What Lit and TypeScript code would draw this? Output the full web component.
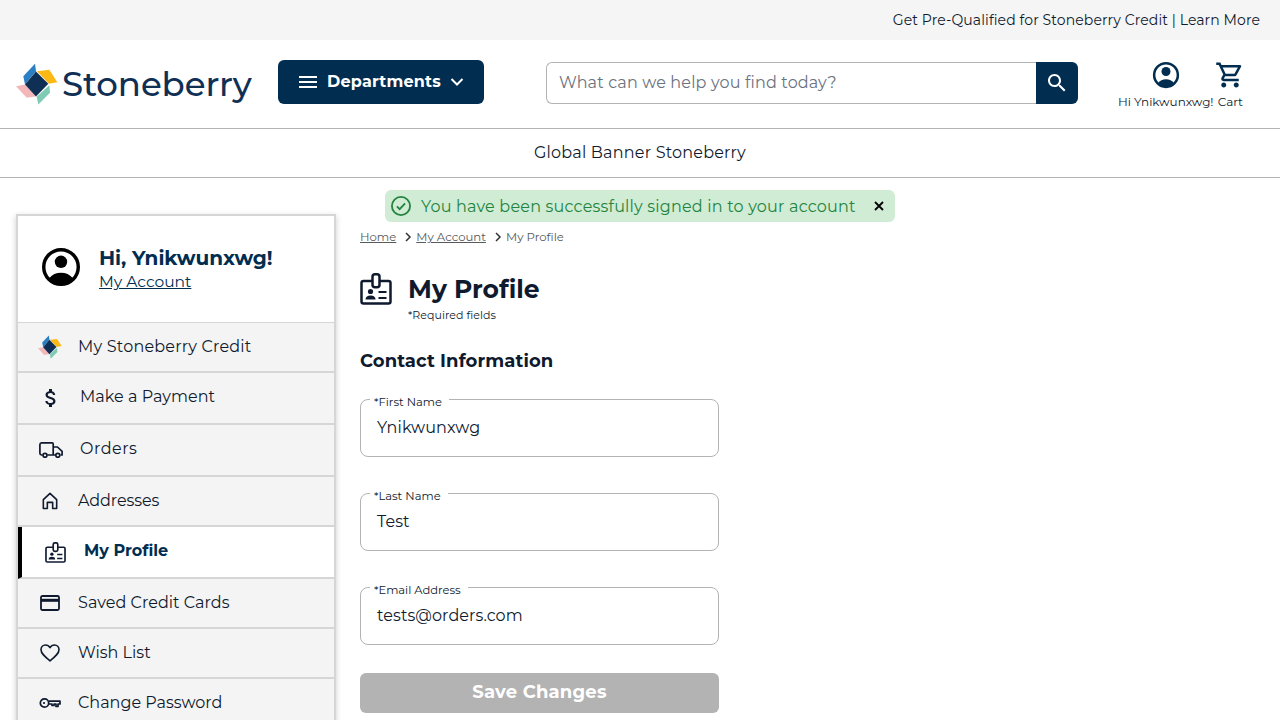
import { LitElement, html, css, svg } from "lit";
import { customElement } from "lit/decorators.js";

const logo = (size: number) => html`<svg class="logo-mark" viewBox="16 64 42 41" width=${size} height=${size} aria-hidden="true">
  <polygon points="23.3,76.7 35,64.3 36,71.7 25,85" fill="#2b7fc3"/>
  <polygon points="37,71.7 49.3,70.3 57.3,82.7 49,84.3" fill="#fdb913"/>
  <polygon points="16,86.7 25,85 36.7,96.7 26.7,98.3" fill="#f3b7b9"/>
  <polygon points="36.7,97.3 49.3,85.7 50,93.3 38.3,105" fill="#7fcbb3"/>
  <polygon points="36,72 48.3,84.3 36,97 25,85" fill="#102f55"/>
</svg>`;

const idBadge = svg`<path fill="none" stroke="currentColor" stroke-width="2.5" stroke-linejoin="round" d="M12 8H3.500a2 2 0 0 0-2 2v18.500a2 2 0 0 0 2 2h25a2 2 0 0 0 2-2V10a2 2 0 0 0-2-2H20"/>
<rect x="12.500" y="1.300" width="7" height="13" rx="2.500" fill="none" stroke="currentColor" stroke-width="2.500"/>
<circle cx="10.500" cy="18.500" r="2.600" fill="currentColor"/>
<path fill="currentColor" d="M5.500 26.500c0-2.800 2.200-4 5-4s5 1.200 5 4z"/>
<path stroke="currentColor" stroke-width="2.200" d="M18.500 19h8M18.500 25h8"/>`;

const icons: Record<string, unknown> = {
  dollar: html`<svg viewBox="0 0 24 24" width="24" height="24"><path fill="currentColor" d="M11.800 10.900c-2.270-.59-3-1.200-3-2.150 0-1.090 1.010-1.850 2.700-1.850 1.780 0 2.440.85 2.500 2.100h2.210c-.07-1.720-1.120-3.300-3.210-3.810V3h-3v2.160c-1.940.42-3.500 1.680-3.500 3.610 0 2.310 1.910 3.460 4.700 4.130 2.500.6 3 1.480 3 2.410 0 .69-.49 1.790-2.700 1.790-2.060 0-2.870-.92-2.980-2.100h-2.200c.12 2.190 1.760 3.420 3.680 3.830V21h3v-2.150c1.950-.37 3.500-1.500 3.500-3.550 0-2.840-2.430-3.810-4.700-4.400z"/></svg>`,
  truck: html`<svg viewBox="0 0 24 16" width="24" height="16"><path fill="none" stroke="currentColor" stroke-width="1.700" stroke-linejoin="round" d="M3.500 13H2.500A1.700 1.700 0 0 1 .9 11.300V2.500A1.700 1.700 0 0 1 2.500.9h10.700a1 1 0 0 1 1 1V13H8.500M14.200 5h4.300l4.600 4.300V13h-1.600M14.200 13h2.300"/><circle cx="6" cy="13.300" r="2" fill="none" stroke="currentColor" stroke-width="1.700"/><circle cx="18.800" cy="13.300" r="2" fill="none" stroke="currentColor" stroke-width="1.700"/></svg>`,
  home: html`<svg viewBox="0 0 18 20" width="16" height="18"><path fill="none" stroke="currentColor" stroke-width="1.800" stroke-linejoin="round" d="M1.500 8.500 9 1.500l7.500 7V18.500h-4.500V11.500H6v7H1.500z"/></svg>`,
  id: html`<svg viewBox="0 0 32 32" width="21" height="21">${idBadge}</svg>`,
  card: html`<svg viewBox="0 0 20 16" width="20" height="16"><rect x="1" y="1" width="18" height="14" rx="1.500" fill="none" stroke="currentColor" stroke-width="1.800"/><rect x="1" y="3.800" width="18" height="3" fill="currentColor"/></svg>`,
  heart: html`<svg viewBox="0 0 20 18" width="20" height="18"><path fill="none" stroke="currentColor" stroke-width="1.600" stroke-linejoin="round" d="M10 16.800C4.500 12.300 1 9.300 1 5.700 1 3 3 1 5.500 1 7.300 1 9 2 10 3.700 11 2 12.700 1 14.500 1 17 1 19 3 19 5.700c0 3.600-3.500 6.600-9 11.100z"/></svg>`,
  key: html`<svg viewBox="0 0 22 12" width="22" height="12"><circle cx="5.500" cy="6" r="4.200" fill="none" stroke="currentColor" stroke-width="1.700"/><circle cx="5" cy="6" r="1.100" fill="currentColor"/><path fill="none" stroke="currentColor" stroke-width="1.700" stroke-linejoin="round" d="M9.700 4.200H21V7h-2v2.500h-2V7h-2v1.500h-2V7H9.700"/></svg>`,
};

const nav = [
  { label: "My Stoneberry Credit", icon: "logo", cls: "h50", ls: 0.2 },
  { label: "Make a Payment", icon: "dollar", cls: "h52", ls: 0.05 },
  { label: "Orders", icon: "truck", cls: "h52", ls: 0.5 },
  { label: "Addresses", icon: "home", cls: "h50", ls: -0.1 },
  { label: "My Profile", icon: "id", cls: "h52 active", ls: 0 },
  { label: "Saved Credit Cards", icon: "card", cls: "h50", ls: 0.05 },
  { label: "Wish List", icon: "heart", cls: "h50", ls: 0 },
  { label: "Change Password", icon: "key", cls: "h50", ls: 0 },
];

const fields = [
  { label: "*First Name", value: "Ynikwunxwg" },
  { label: "*Last Name", value: "Test" },
  { label: "*Email Address", value: "tests@orders.com" },
];

@customElement("app-root")
export class AppRoot extends LitElement {
  static styles = css`
    :host { display: block; width: 1280px; height: 720px; overflow: hidden; position: relative; background: #fff; color: #0f1a2e; font-family: "Montserrat", "Inter", "Liberation Sans", sans-serif; }
    a { color: inherit; }
    .promo { height: 40px; background: #f5f5f5; display: flex; align-items: center; justify-content: flex-end; padding-right: 20px; font-size: 14px; letter-spacing: .1px; }
    .header { height: 88px; border-bottom: 1px solid #b3b3b3; display: flex; align-items: center; position: relative; }
    .brand { display: flex; align-items: center; margin-left: 16px; width: 262px; height: 42px; gap: 4px; }
    .wordmark { font-size: 34px; font-weight: 500; color: #102f55; letter-spacing: -.1px; line-height: 42px; }
    .dept { width: 206px; height: 44px; background: #002d50; color: #fff; border-radius: 6px; display: flex; align-items: center; justify-content: center; gap: 9px; font-weight: 700; font-size: 16px; letter-spacing: .2px; margin-top: -4px; padding: 0 0 2px 0; box-sizing: border-box; }
    .dept svg { margin-top: 2px; }
    .search { margin-left: 62px; width: 532px; height: 42px; display: flex; margin-top: -2px; }
    .search-box { flex: 1; border: 1px solid #b3b3b3; border-right: 0; border-radius: 6px 0 0 6px; display: flex; align-items: center; padding: 0 0 2px 12px; color: #6b7280; font-size: 16px; letter-spacing: .15px; }
    .search-btn { width: 42px; background: #002d50; border-radius: 0 6px 6px 0; display: flex; align-items: center; justify-content: center; color: #fff; }
    .acts { display: flex; margin-left: 40px; font-size: 12px; margin-top: 1px; letter-spacing: -.05px; }
    .act { display: flex; flex-direction: column; align-items: center; color: #002d50; gap: 4px; }
    .act + .act { margin-left: 2px; }
    .act span { color: #0f1a2e; white-space: nowrap; line-height: 15px; }
    .banner { height: 48px; border-bottom: 1px solid #b3b3b3; display: flex; align-items: center; justify-content: center; font-size: 16px; letter-spacing: .2px; padding-bottom: 2px; box-sizing: content-box; height: 46px; }
    .main { display: flex; padding: 36px 0 0 16px; }
    .side { width: 320px; flex: none; border: 2px solid #d6d6d6; box-sizing: border-box; box-shadow: 0 2px 6px rgba(0,0,0,.2); }
    .hello { height: 107px; box-sizing: border-box; border-bottom: 1px solid #d6d6d6; display: flex; align-items: center; padding: 0 0 0 24px; gap: 19px; }
    .hello svg { margin-bottom: 4px; }
    .hello-text { display: flex; flex-direction: column; }
    .hello strong { font-size: 20px; color: #002d50; font-weight: 700; line-height: 26px; letter-spacing: -.05px; }
    .hello a { font-size: 15.500px; color: #002d50; line-height: 22px; }
    .row { background: #f4f4f4; border-bottom: 2px solid #d6d6d6; box-sizing: border-box; display: flex; align-items: center; padding-left: 20px; font-size: 16px; }
    .h50 { height: 50px; }
    .h52 { height: 52px; padding-left: 21px; }
    .row .ic { display: flex; justify-content: center; align-items: center; flex: none; width: 24px; }
    .row .t { margin: 0 0 2px 16px; }
    .h52 .t { margin: 0 0 4px 17px; }
    .row.active { background: #fff; border-left: 4px solid #000; color: #002d50; font-weight: 700; }
    .row.active .ic { color: #0f1a2e; }
    .content { margin-left: 24px; width: 360px; flex: none; }
    .crumbs { display: flex; align-items: center; font-size: 11.700px; color: #5a5a5a; height: 16px; margin-top: 15px; }
    .crumbs svg { margin: 0 2px 0 6px; color: #333; }
    .title { display: flex; gap: 16px; margin-top: 28px; }
    .title svg { flex: none; }
    h1 { margin: 0; font-size: 25px; line-height: 32px; font-weight: 700; }
    .req { font-size: 11px; line-height: 16px; margin-top: 2px; letter-spacing: .05px; }
    h2 { margin: 26px 0 0; font-size: 18px; font-weight: 700; line-height: 24px; letter-spacing: .1px; }
    .field { position: relative; height: 58px; box-sizing: border-box; border: 1px solid #b3b3b3; border-radius: 8px; margin-top: 36px; width: 359px; display: flex; align-items: center; padding: 0 16px 2px; font-size: 16px; letter-spacing: .08px; }
    h2 + .field { margin-top: 26px; }
    .field label { position: absolute; left: 9px; top: -4px; padding: 0 7px 0 4px; background: #fff; font-size: 11.500px; line-height: 12px; letter-spacing: 0; }
    .save { margin-top: 28px; width: 359px; height: 40px; border-radius: 6px; background: #b3b3b3; color: #fff; font-weight: 700; font-size: 18px; letter-spacing: .2px; display: flex; align-items: center; justify-content: center; padding-bottom: 3px; box-sizing: border-box; }
    .alert { position: absolute; left: 385px; top: 190px; width: 510px; height: 32px; box-sizing: border-box; background: #d0ecd5; border-radius: 6px; display: flex; align-items: center; padding: 0 0 0 6px; color: #24843f; font-size: 16px; letter-spacing: .2px; gap: 10px; white-space: nowrap; }
    .alert .x { margin-left: 7px; color: #000; display: flex; }
  `;

  render() {
    return html`
      <div class="promo">Get Pre-Qualified for Stoneberry Credit | Learn More</div>
      <div class="header">
        <div class="brand">${logo(42)}<span class="wordmark">Stoneberry</span></div>
        <div class="dept">
          <svg width="20" height="14" viewBox="0 0 20 14"><path stroke="#fff" stroke-width="2" d="M1 2h18M1 7h18M1 12h18"/></svg>
          <span>Departments</span>
          <svg width="14" height="10" viewBox="0 0 14 10"><path fill="none" stroke="#fff" stroke-width="2" d="M1.500 2 7 7.500 12.500 2"/></svg>
        </div>
        <div class="search">
          <div class="search-box">What can we help you find today?</div>
          <div class="search-btn"><svg viewBox="0 0 24 24" width="24" height="24"><path fill="currentColor" d="M15.500 14h-.79l-.28-.27C15.410 12.590 16 11.110 16 9.500 16 5.910 13.090 3 9.500 3S3 5.910 3 9.500 5.910 16 9.500 16c1.610 0 3.090-.59 4.230-1.570l.27.280v.79l5 4.990L20.490 19l-4.990-5zm-6 0C7.010 14 5 11.990 5 9.500S7.010 5 9.500 5 14 7.010 14 9.500 11.990 14 9.500 14z"/></svg></div>
        </div>
        <div class="acts">
          <div class="act">
            <svg viewBox="0 0 24 24" width="30" height="30"><circle cx="12" cy="12" r="9.500" fill="none" stroke="currentColor" stroke-width="2"/><circle cx="12" cy="9.200" r="3.600" fill="currentColor"/><path fill="currentColor" d="M5.500 18.500C7 16.300 9.400 15.300 12 15.300s5 1 6.500 3.200C16.800 20.300 14.500 21.200 12 21.200s-4.800-.9-6.500-2.700z"/></svg>
            <span>Hi Ynikwunxwg!</span>
          </div>
          <div class="act">
            <svg viewBox="0 0 24 24" width="30" height="30"><path fill="currentColor" d="M15.550 13c.75 0 1.410-.41 1.750-1.030l3.580-6.490c.37-.66-.11-1.480-.87-1.480H5.210l-.94-2H1v2h2l3.600 7.590-1.350 2.440C4.520 15.370 5.480 17 7 17h12v-2H7l1.100-2h7.450zM6.160 6h12.150l-2.760 5H8.530L6.160 6zM7 18c-1.100 0-1.990.9-1.990 2S5.900 22 7 22s2-.9 2-2-.9-2-2-2zm10 0c-1.100 0-1.990.9-1.990 2s.89 2 1.990 2 2-.9 2-2-.9-2-2-2z"/></svg>
            <span>Cart</span>
          </div>
        </div>
      </div>
      <div class="banner">Global Banner Stoneberry</div>
      <div class="main">
        <aside class="side">
          <div class="hello">
            <svg viewBox="1 1 22 22" width="38" height="38"><circle cx="12" cy="12" r="10" fill="none" stroke="#000" stroke-width="2"/><circle cx="12" cy="9" r="3.600" fill="#000"/><path fill="#000" d="M5 18.600C6.800 16.300 9.300 15.300 12 15.300s5.200 1 7 3.300C17.200 20.600 14.700 21.800 12 21.800s-5.200-1.200-7-3.200z"/></svg>
            <div class="hello-text"><strong>Hi, Ynikwunxwg!</strong><a href="#">My Account</a></div>
          </div>
          ${nav.map(
            (n) => html`<div class="row ${n.cls}">
              <span class="ic">${n.icon === "logo" ? logo(24) : icons[n.icon]}</span>
              <span class="t" style="letter-spacing:${n.ls}px">${n.label}</span>
            </div>`
          )}
        </aside>
        <section class="content">
          <div class="crumbs">
            <a href="#">Home</a>
            <svg width="12" height="12" viewBox="0 0 12 12"><path fill="none" stroke="currentColor" stroke-width="1.500" d="M4 2l4 4-4 4"/></svg>
            <a href="#">My Account</a>
            <svg width="12" height="12" viewBox="0 0 12 12"><path fill="none" stroke="currentColor" stroke-width="1.500" d="M4 2l4 4-4 4"/></svg>
            <span>My Profile</span>
          </div>
          <div class="title">
            <svg viewBox="0 0 32 32" width="32" height="32">${idBadge}</svg>
            <div><h1>My Profile</h1><div class="req">*Required fields</div></div>
          </div>
          <h2>Contact Information</h2>
          ${fields.map((f) => html`<div class="field"><label>${f.label}</label>${f.value}</div>`)}
          <div class="save">Save Changes</div>
        </section>
      </div>
      <div class="alert">
        <svg viewBox="1 1 22 22" width="20" height="20"><circle cx="12" cy="12" r="10" fill="none" stroke="currentColor" stroke-width="2"/><path fill="none" stroke="currentColor" stroke-width="2" d="M7.500 12.500l3 3 6-6.500"/></svg>
        <span>You have been successfully signed in to your account</span>
        <span class="x"><svg width="12" height="12" viewBox="0 0 12 12"><path stroke="#000" stroke-width="1.800" d="M2 2l8 8M10 2l-8 8"/></svg></span>
      </div>
    `;
  }
}
